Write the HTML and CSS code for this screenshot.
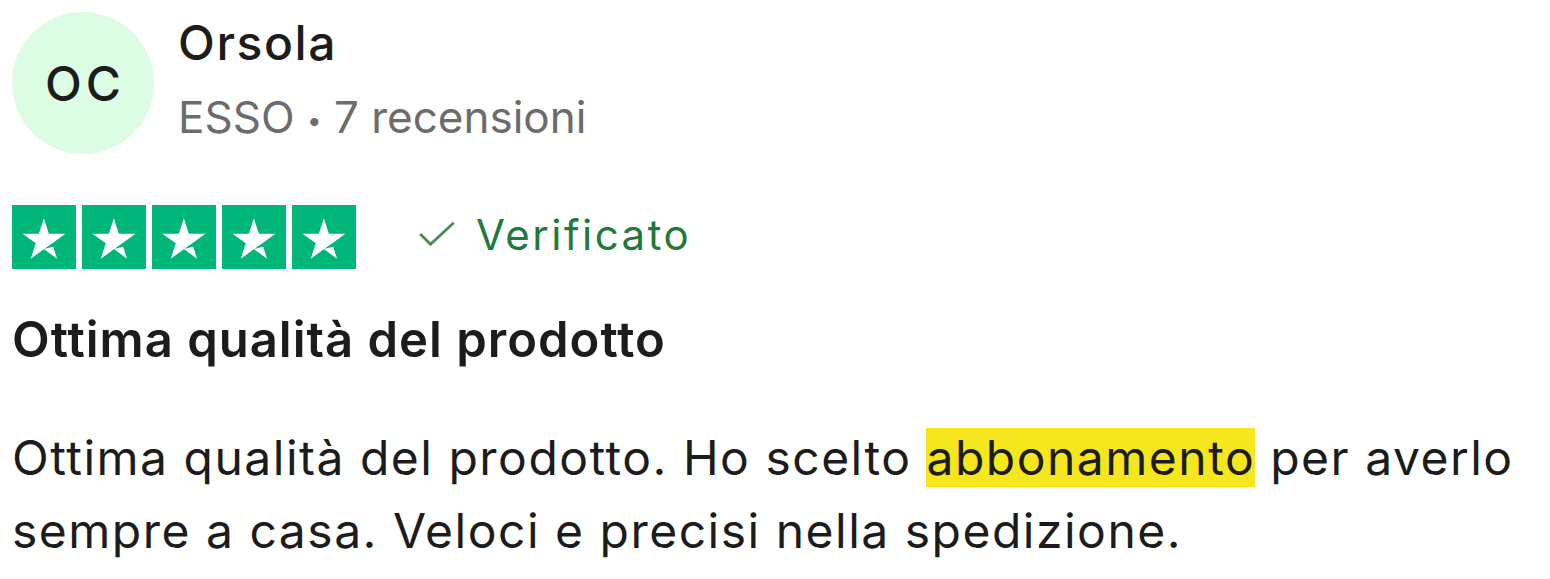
FILE: index.html
```html
<!DOCTYPE html>
<html>
<head>
	<title>Recensione</title>
	<link rel="stylesheet" href="styles.css">
</head>
<body>
<div class="review">
  <div class="consumer">
    <div class="avatar">OC</div>
    <div class="consumer-info">
      <div class="name">Orsola</div>
      <div class="meta">ESSO <span class="dot">&bull;</span> 7 recensioni</div>
    </div>
  </div>

  <div class="rating-row">
    <div class="stars">
      <span class="star"><svg viewBox="0 0 46 46"><path d="M22.9 31.7l6.7-1.7 2.8 8.6-9.5-6.9zm15.4-11.1H26.5L22.9 9.5l-3.6 11.1H7.5l9.6 6.9-3.6 11.1 9.6-6.9 5.9-4.2 9.4-6.9z"/></svg></span>
      <span class="star"><svg viewBox="0 0 46 46"><path d="M22.9 31.7l6.7-1.7 2.8 8.6-9.5-6.9zm15.4-11.1H26.5L22.9 9.5l-3.6 11.1H7.5l9.6 6.9-3.6 11.1 9.6-6.9 5.9-4.2 9.4-6.9z"/></svg></span>
      <span class="star"><svg viewBox="0 0 46 46"><path d="M22.9 31.7l6.7-1.7 2.8 8.6-9.5-6.9zm15.4-11.1H26.5L22.9 9.5l-3.6 11.1H7.5l9.6 6.9-3.6 11.1 9.6-6.9 5.9-4.2 9.4-6.9z"/></svg></span>
      <span class="star"><svg viewBox="0 0 46 46"><path d="M22.9 31.7l6.7-1.7 2.8 8.6-9.5-6.9zm15.4-11.1H26.5L22.9 9.5l-3.6 11.1H7.5l9.6 6.9-3.6 11.1 9.6-6.9 5.9-4.2 9.4-6.9z"/></svg></span>
      <span class="star"><svg viewBox="0 0 46 46"><path d="M22.9 31.7l6.7-1.7 2.8 8.6-9.5-6.9zm15.4-11.1H26.5L22.9 9.5l-3.6 11.1H7.5l9.6 6.9-3.6 11.1 9.6-6.9 5.9-4.2 9.4-6.9z"/></svg></span>
    </div>
    <div class="verified">
      <svg class="check" viewBox="0 0 40 30"><path d="M2 15 L13 26 L38 3"/></svg>
      <span>Verificato</span>
    </div>
  </div>

  <h2 class="title">Ottima qualità del prodotto</h2>

  <p class="text">Ottima qualità del prodotto. Ho scelto <mark>abbonamento</mark> per averlo sempre a casa. Veloci e precisi nella spedizione.</p>
</div>
</body>
</html>
```

FILE: styles.css
```css
html, body {
  margin: 0;
  background-color: white;
}

body {
  padding: 12px;
  font-family: 'Inter', 'Liberation Sans', sans-serif;
  color: #1c1c1c;
}

.consumer {
  display: flex;
  align-items: flex-start;
  gap: 24px;
}

.avatar {
  width: 142px;
  height: 142px;
  box-sizing: border-box;
  padding-left: 4px;
  border-radius: 50%;
  background-color: #dcfce3;
  display: flex;
  justify-content: center;
  align-items: center;
  font-size: 48px;
  font-weight: 500;
  letter-spacing: 4px;
  color: #1c1c1c;
}

.consumer-info {
  padding-top: 2px;
}

.name {
  font-size: 48px;
  font-weight: 500;
  letter-spacing: 1.6px;
  line-height: 58px;
}

.meta {
  font-size: 44px;
  line-height: 58px;
  color: #6c6c6c;
  margin-top: 16px;
}

.dot {
  font-size: 26px;
  vertical-align: middle;
}

.rating-row {
  display: flex;
  align-items: center;
  gap: 62px;
  margin-top: 51px;
}

.stars {
  display: flex;
  gap: 6px;
}

.star {
  width: 64px;
  height: 64px;
  background-color: #00b67a;
  display: flex;
  justify-content: center;
  align-items: center;
}

.star svg {
  width: 64px;
  height: 64px;
  fill: white;
}

.verified {
  display: flex;
  align-items: center;
  gap: 20px;
  font-size: 42px;
  letter-spacing: 2.5px;
  color: #1f7a3b;
  margin-top: -6px;
}

.check {
  width: 38px;
  height: 28px;
  fill: none;
  stroke: #4a8c57;
  stroke-width: 3;
}

.title {
  font-size: 49px;
  font-weight: 600;
  letter-spacing: 1px;
  line-height: 60px;
  margin: 41px 0 0;
}

.text {
  font-size: 48px;
  letter-spacing: 1.5px;
  line-height: 73px;
  margin: 51px 0 0;
}

mark {
  background-color: #f5e61e;
  color: inherit;
}
```
